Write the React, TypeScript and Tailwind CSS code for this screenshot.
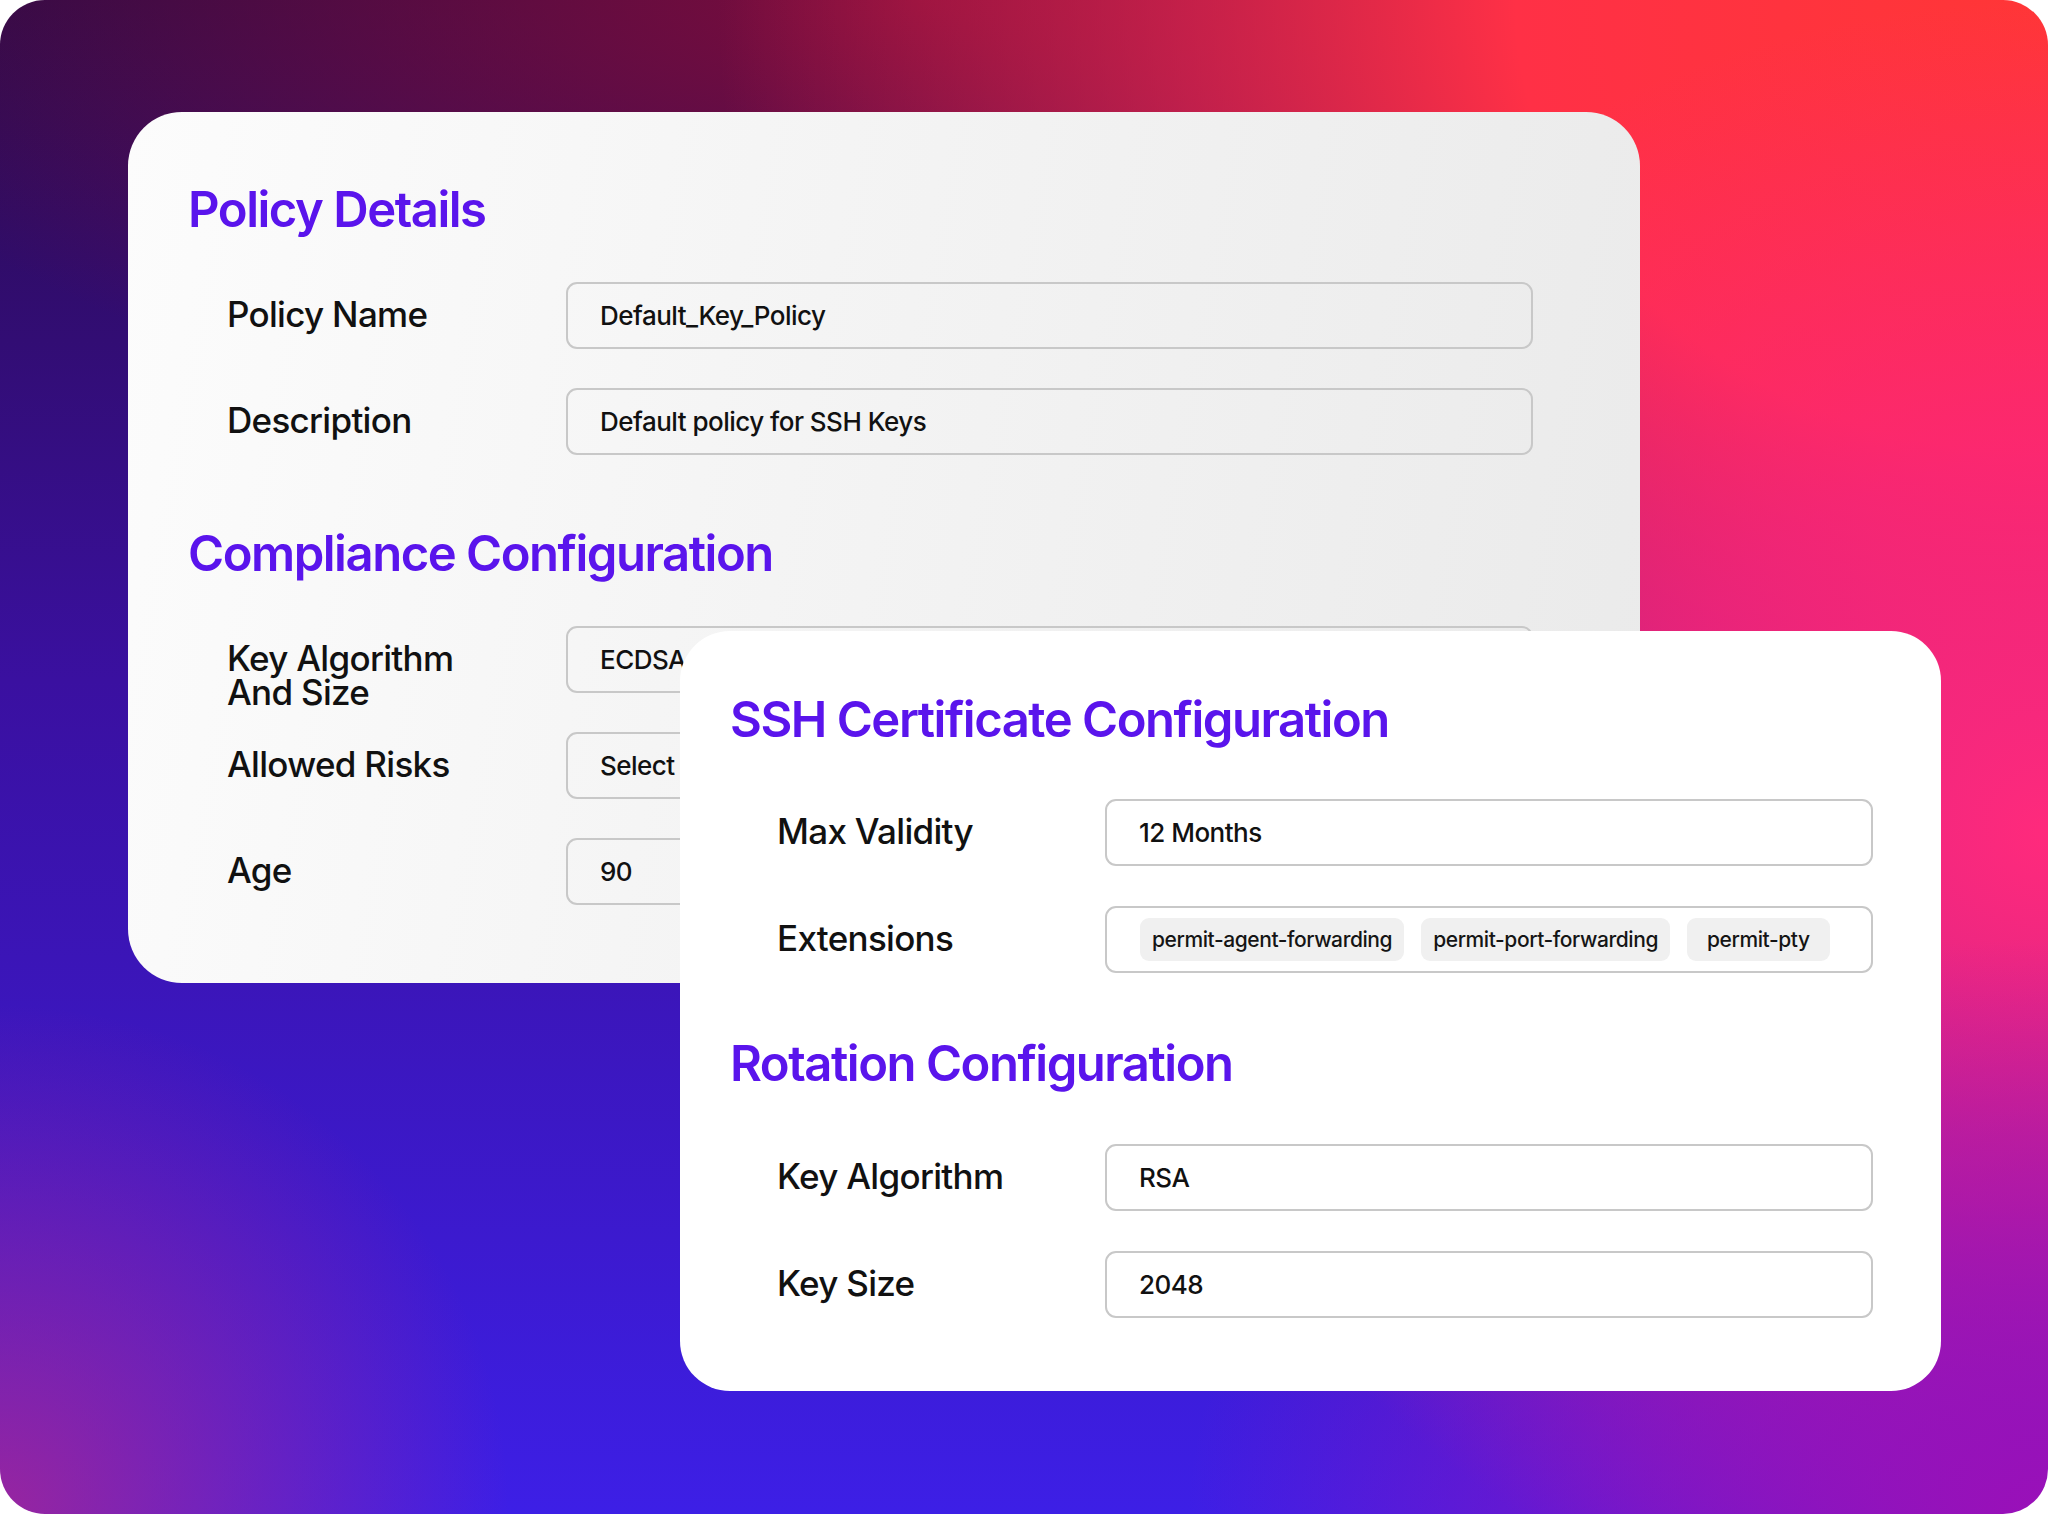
import React from "react";

const font = "font-['Inter','Liberation_Sans',sans-serif]";

const Heading = ({ children }: { children: React.ReactNode }) => (
  <h2 className="text-[49px] leading-[50px] font-semibold tracking-[-0.03em] text-[#5a14ec] whitespace-nowrap">
    {children}
  </h2>
);

interface RowProps {
  label: React.ReactNode;
  labelWidth: string;
  inputWidth: string;
  children: React.ReactNode;
}

const Label = ({ width, children }: { width: string; children: React.ReactNode }) => (
  <div
    className={`${width} shrink-0 mt-[15px] text-[35px] leading-[34px] font-medium tracking-[-0.02em] text-[#111]`}
  >
    {children}
  </div>
);

const Row = ({ label, labelWidth, inputWidth, children }: RowProps) => (
  <div className="flex items-start h-[67px]">
    <Label width={labelWidth}>{label}</Label>
    <div
      className={`${inputWidth} h-[67px] shrink-0 rounded-[11px] border-2 border-[#c8c8c8] flex items-center px-[32px] text-[26px] font-medium tracking-[-0.02em] text-[#111] whitespace-nowrap overflow-hidden`}
    >
      {children}
    </div>
  </div>
);

const Chip = ({ children, wide = false }: { children: React.ReactNode; wide?: boolean }) => (
  <span
    className={`h-[43px] ${wide ? "px-[20px]" : "px-[12px]"} rounded-[9px] bg-[#f0f0f0] flex items-center text-[21px] font-medium tracking-[-0.02em] text-[#151515] whitespace-nowrap`}
  >
    {children}
  </span>
);

export default function App() {
  return (
    <div className={`${font} w-[2048px] h-[1514px] bg-white`}>
      <div className="relative w-[2048px] h-[1514px] rounded-[45px] overflow-hidden pt-[112px] pl-[128px] bg-[radial-gradient(circle_at_0%_100%,rgba(190,40,130,0.7),transparent_20%),radial-gradient(ellipse_42%_38%_at_100%_100%,#9a10b8_0%,rgba(154,16,184,0.6)_45%,transparent_100%),radial-gradient(ellipse_45%_55%_at_100%_55%,#ff2a7c_0%,rgba(250,36,130,0.7)_45%,transparent_100%),radial-gradient(ellipse_65%_75%_at_100%_0%,#ff3636_0%,#ff3046_40%,rgba(255,44,80,0.6)_65%,transparent_100%),radial-gradient(ellipse_55%_30%_at_45%_0%,#7e0d3c_0%,transparent_100%),linear-gradient(180deg,#2a0a48_0%,#3a10a0_45%,#3d1fe6_100%)]">
        {/* back card */}
        <div className="w-[1512px] h-[871px] rounded-[54px] bg-[linear-gradient(100deg,#fcfcfc_0%,#f1f1f1_60%,#eaeaea_100%)] pt-[73px] pl-[60px]">
          <Heading>Policy Details</Heading>
          <div className="mt-[47px] ml-[39px] flex flex-col gap-[39px]">
            <Row label="Policy Name" labelWidth="w-[339px]" inputWidth="w-[967px]">
              Default_Key_Policy
            </Row>
            <Row label="Description" labelWidth="w-[339px]" inputWidth="w-[967px]">
              Default policy for SSH Keys
            </Row>
          </div>
          <div className="mt-[74px]">
            <Heading>Compliance Configuration</Heading>
          </div>
          <div className="mt-[47px] ml-[39px] flex flex-col gap-[39px]">
            <Row
              label={
                <>
                  Key Algorithm
                  <br />
                  And Size
                </>
              }
              labelWidth="w-[339px]"
              inputWidth="w-[967px]"
            >
              ECDSA
            </Row>
            <Row label="Allowed Risks" labelWidth="w-[339px]" inputWidth="w-[967px]">
              Select
            </Row>
            <Row label="Age" labelWidth="w-[339px]" inputWidth="w-[967px]">
              90
            </Row>
          </div>
        </div>

        {/* front card */}
        <div className="absolute left-[680px] top-[631px] w-[1261px] h-[760px] rounded-[50px] bg-white pt-[64px] pl-[50px]">
          <Heading>SSH Certificate Configuration</Heading>
          <div className="mt-[54px] ml-[47px] flex flex-col gap-[40px]">
            <Row label="Max Validity" labelWidth="w-[328px]" inputWidth="w-[768px]">
              12 Months
            </Row>
            <div className="flex items-start h-[67px]">
              <Label width="w-[328px]">Extensions</Label>
              <div className="w-[768px] h-[67px] shrink-0 rounded-[11px] border-2 border-[#c8c8c8] flex items-center gap-[17px] px-[33px]">
                <Chip>permit-agent-forwarding</Chip>
                <Chip>permit-port-forwarding</Chip>
                <Chip wide>permit-pty</Chip>
              </div>
            </div>
          </div>
          <div className="mt-[66px]">
            <Heading>Rotation Configuration</Heading>
          </div>
          <div className="mt-[55px] ml-[47px] flex flex-col gap-[40px]">
            <Row label="Key Algorithm" labelWidth="w-[328px]" inputWidth="w-[768px]">
              RSA
            </Row>
            <Row label="Key Size" labelWidth="w-[328px]" inputWidth="w-[768px]">
              2048
            </Row>
          </div>
        </div>
      </div>
    </div>
  );
}
